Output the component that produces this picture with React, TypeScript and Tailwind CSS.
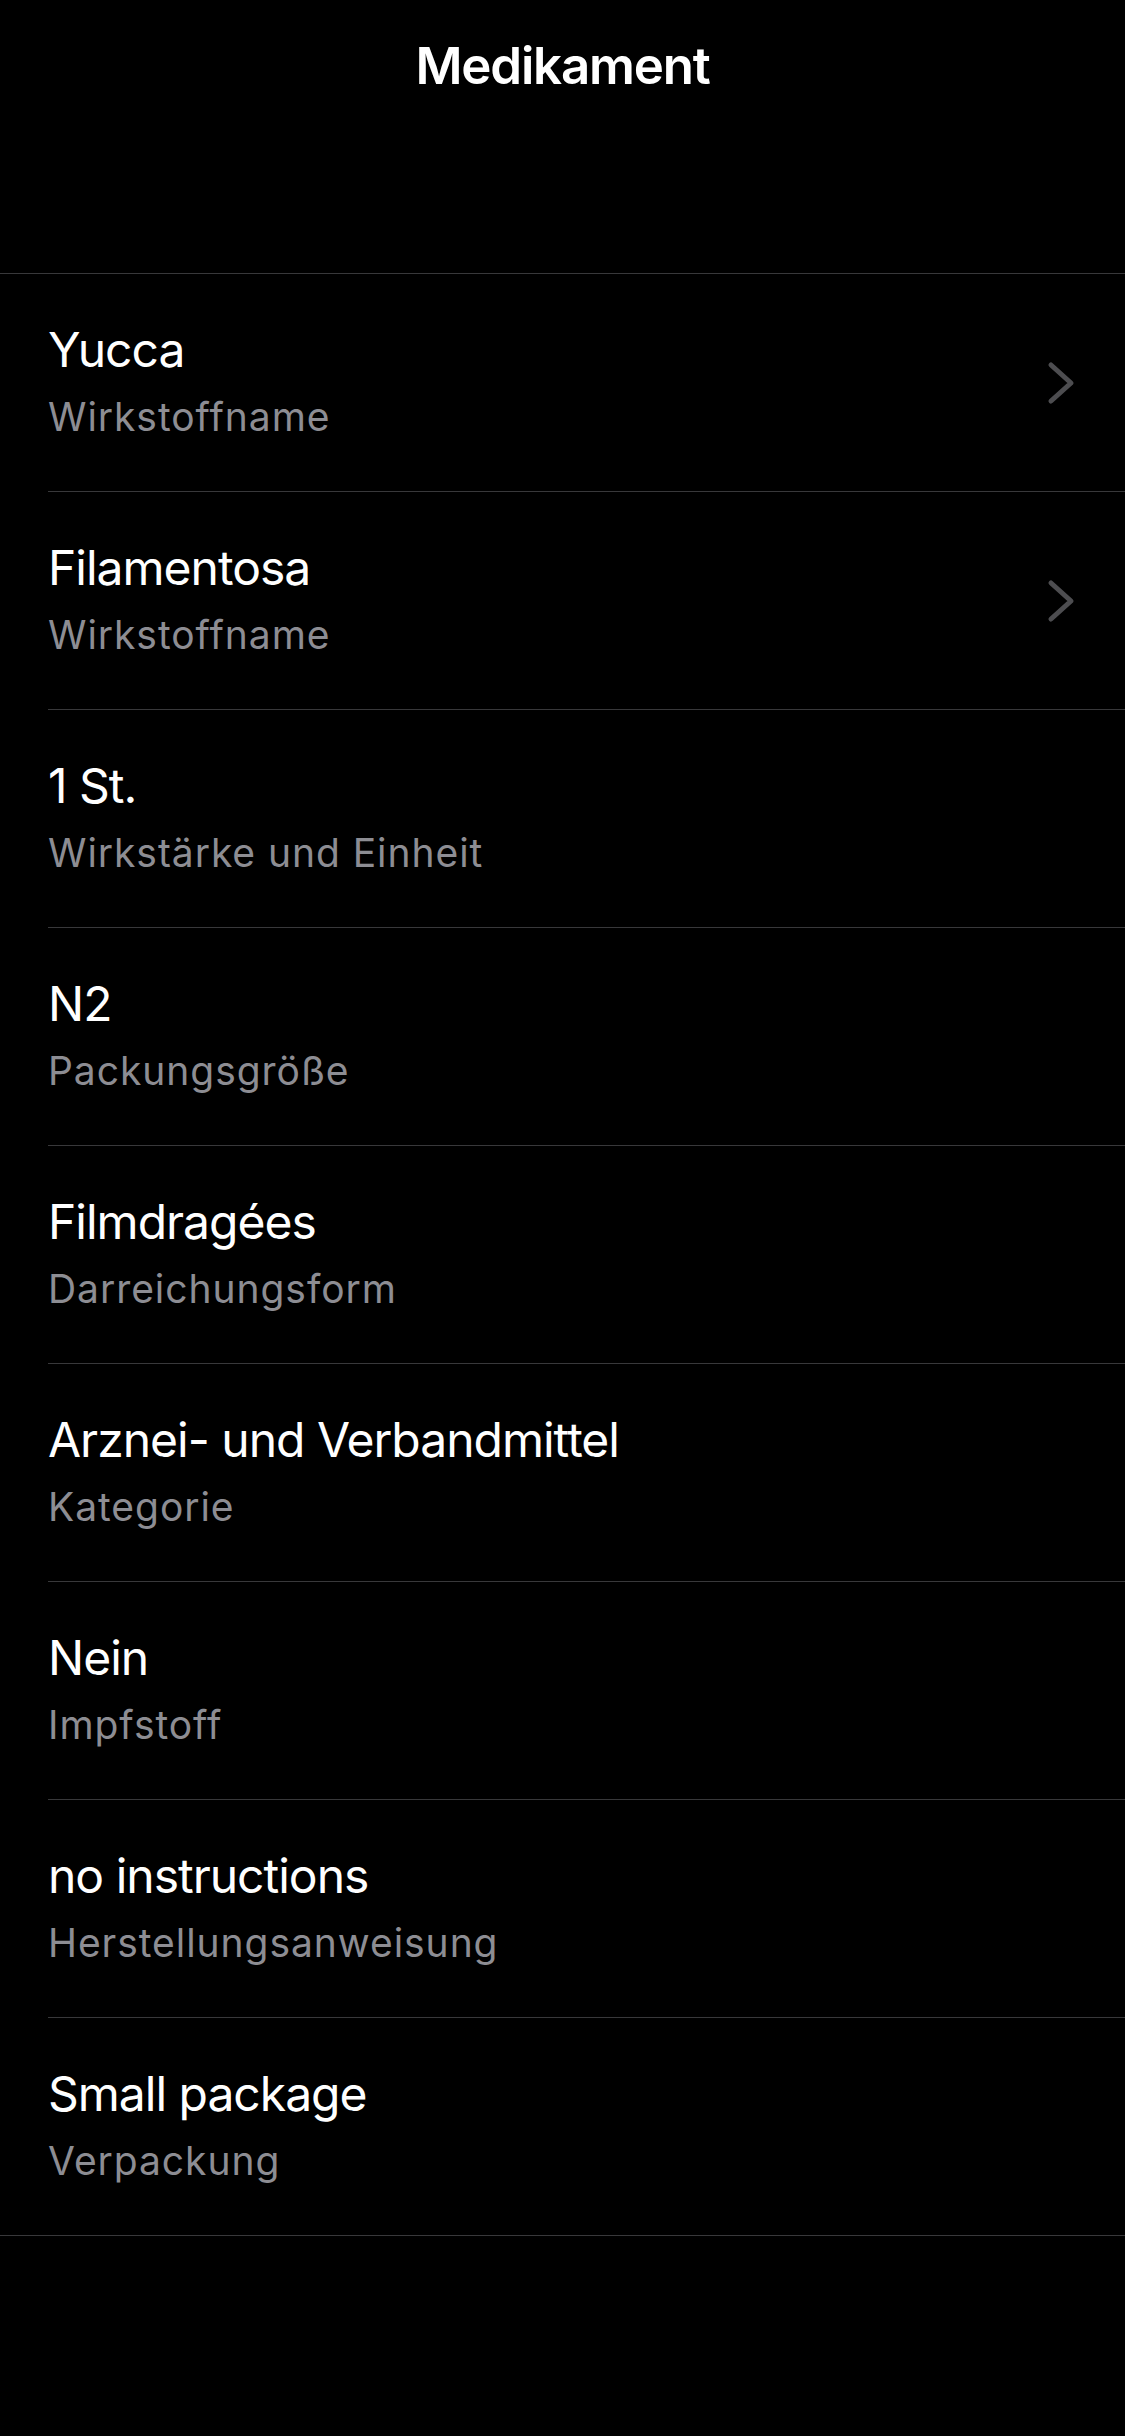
import React from "react";

type Row = { title: string; subtitle: string; chevron?: boolean };

const rows: Row[] = [
  { title: "Yucca", subtitle: "Wirkstoffname", chevron: true },
  { title: "Filamentosa", subtitle: "Wirkstoffname", chevron: true },
  { title: "1 St.", subtitle: "Wirkstärke und Einheit" },
  { title: "N2", subtitle: "Packungsgröße" },
  { title: "Filmdragées", subtitle: "Darreichungsform" },
  { title: "Arznei- und Verbandmittel", subtitle: "Kategorie" },
  { title: "Nein", subtitle: "Impfstoff" },
  { title: "no instructions", subtitle: "Herstellungsanweisung" },
  { title: "Small package", subtitle: "Verpackung" },
];

function Chevron() {
  return (
    <svg width="28" height="46" viewBox="0 0 28 46" fill="none">
      <polyline
        points="4,5 24,23 4,41"
        stroke="#4d4d50"
        strokeWidth="5"
        strokeLinecap="round"
        strokeLinejoin="round"
      />
    </svg>
  );
}

export default function App() {
  return (
    <div
      className="min-h-[2436px] w-[1125px] bg-black text-white"
      style={{ fontFamily: "Inter, 'Noto Sans', sans-serif" }}
    >
      <header className="h-[274px] border-b border-[#38383a] flex justify-center">
        <h1 className="mt-[36px] text-[51px] leading-[60px] font-semibold tracking-[-1.2px]">
          Medikament
        </h1>
      </header>
      <div className="border-b border-[#38383a]">
        {rows.map((r, i) => (
          <div
            key={i}
            className={
              i === rows.length - 1
                ? "ml-[48px] h-[217px] flex items-start"
                : "ml-[48px] h-[218px] border-b border-[#38383a] flex items-start"
            }
          >
            <div className="flex-1 pt-[48px] flex flex-col gap-[16px]">
              <div className="text-[48px] leading-[56px] text-white tracking-[-1px]">
                {r.title}
              </div>
              <div className="text-[39px] leading-[46px] text-[#8d8d93] tracking-[0.95px]">
                {r.subtitle}
              </div>
            </div>
            {r.chevron && (
              <div className="self-center pr-[50px]">
                <Chevron />
              </div>
            )}
          </div>
        ))}
      </div>
    </div>
  );
}
